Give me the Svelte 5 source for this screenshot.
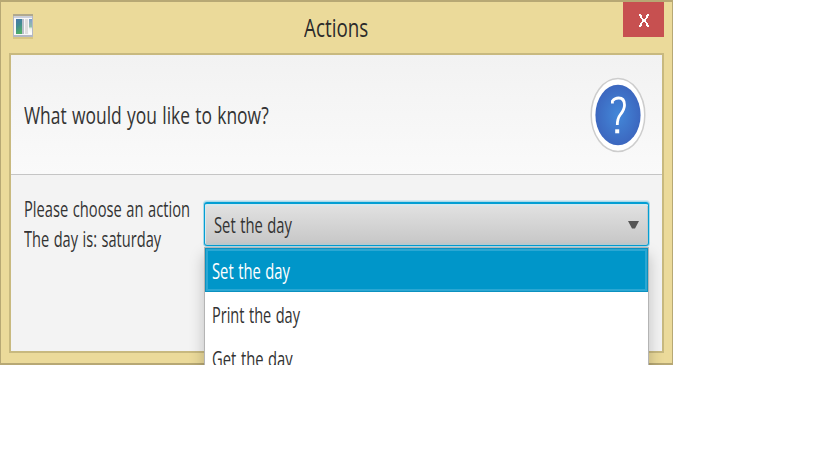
<script>
  const actions = ['Set the day', 'Print the day', 'Get the day'];
  const widths = [78, 88, 81];

  // Condenses a label horizontally so that it takes up the given width.
  function fit(node, width) {
    const apply = () => {
      node.style.transform = 'none';
      node.style.transform = `scaleX(${width / node.offsetWidth})`;
    };
    apply();
    document.fonts?.ready.then(apply);
  }
</script>

<div class="window">
  <header class="titlebar">
    <svg class="app-icon" width="20" height="25" viewBox="0 0 20 25">
      <defs>
        <linearGradient id="pane" x1="0" y1="0" x2="0.3" y2="1">
          <stop offset="0" stop-color="#4878ad" />
          <stop offset="0.5" stop-color="#408a92" />
          <stop offset="1" stop-color="#4fae68" />
        </linearGradient>
        <linearGradient id="side" x1="0" y1="0" x2="0" y2="1">
          <stop offset="0" stop-color="#7f9fce" />
          <stop offset="0.5" stop-color="#93bda9" />
          <stop offset="0.65" stop-color="#eef3ee" />
          <stop offset="1" stop-color="#fff" />
        </linearGradient>
      </defs>
      <rect width="20" height="25" fill="#d7c583" />
      <rect width="20" height="23" fill="#b4b8c4" />
      <rect width="20" height="2" fill="#b0a98e" />
      <rect x="1" y="2" width="18" height="2" fill="#ccd0dc" />
      <rect x="1" y="4" width="18" height="17" fill="#f8f8f8" />
      <rect x="3" y="5" width="6" height="15" fill="url(#pane)" />
      <rect x="9" y="5" width="2" height="15" fill="#b9bfc9" />
      <rect x="12" y="5" width="3" height="15" fill="#dedede" />
      <rect x="16" y="5" width="3" height="15" fill="url(#side)" />
    </svg>
    <h1><span use:fit={64}>Actions</span></h1>
    <button class="close" aria-label="Close">
      <svg width="10" height="13" viewBox="0 0 10 13">
        <path d="M0 0h2v1h1v3h1v1h2v-1h1v-3h1v-1h2v2h-1v2h-1v1h-1v3h1v1h1v2h1v2h-2v-1h-1v-3h-1v-1h-2v1h-1v3h-1v1h-2v-2h1v-2h1v-1h1v-3h-1v-1h-1v-2h-1z" fill="#fff" />
      </svg>
    </button>
  </header>

  <main class="dialog">
    <section class="question">
      <p><span use:fit={245}>What would you like to know?</span></p>
      <svg width="56" height="76" viewBox="0 0 56 76">
        <defs>
          <radialGradient id="blue">
            <stop offset="0" stop-color="#4388d9" />
            <stop offset="1" stop-color="#3c67bf" />
          </radialGradient>
        </defs>
        <ellipse cx="28" cy="38" rx="26.8" ry="36.4" fill="#fff" stroke="#cdcdcd" stroke-width="1.5" />
        <ellipse cx="28" cy="38" rx="22.6" ry="30.2" fill="url(#blue)" />
        <path d="M22.4 26.5V24C24 22 26 21 28.6 21C32.6 21 34.5 24 34.5 28C34.5 32.5 32.4 35 30.4 37.5C28 40.5 27.3 42.5 27.3 48" fill="none" stroke="#fff" stroke-width="2.8" />
        <rect x="25.2" y="52.3" width="4" height="4" fill="#fff" />
      </svg>
    </section>

    <section class="body">
      <div class="labels">
        <p><span use:fit={166}>Please choose an action</span></p>
        <p><span use:fit={137}>The day is: saturday</span></p>
      </div>
      <div class="picker">
        <div class="combo">
          <span use:fit={78}>Set the day</span>
          <svg width="11" height="8" viewBox="0 0 11 8"><path d="M0 0H11L7 7.5H4Z" fill="#555" /></svg>
        </div>
        <ul>
          {#each actions as action, i}
            <li class:selected={i === 0}><span use:fit={widths[i]}>{action}</span></li>
          {/each}
        </ul>
      </div>
    </section>
  </main>
</div>

<style>
  :global(body) {
    background: #fff;
  }
  .window {
    box-sizing: border-box;
    width: 673px;
    height: 365px;
    display: flex;
    flex-direction: column;
    background: #ebda9a;
    border: solid #b7a874;
    border-width: 2px 1px;
    font: 21px/30px 'Open Sans', 'Noto Sans', sans-serif;
    word-spacing: 1px;
    color: #333;
    clip-path: inset(0);
  }
  p, h1, ul {
    margin: 0;
    padding: 0;
    font-weight: 400;
  }
  span {
    display: inline-block;
    white-space: nowrap;
    transform-origin: 0 50%;
  }
  .titlebar {
    flex: none;
    height: 51px;
    display: flex;
    align-items: flex-start;
  }
  .app-icon {
    flex: none;
    margin: 12px 0 0 12px;
  }
  h1 {
    flex: 1;
    margin: 10px 0 0 271px;
    font-size: 25px;
    line-height: 30px;
    color: #2b2b2b;
  }
  .close {
    flex: none;
    width: 41px;
    height: 35px;
    margin-right: 8px;
    padding: 2px 0 0 1px;
    border: 0;
    background: #c75050;
    display: flex;
    align-items: center;
    justify-content: center;
  }
  .dialog {
    box-sizing: border-box;
    flex: none;
    width: 655px;
    height: 300px;
    margin-left: 8px;
    border: 2px solid #c8b97f;
    background: #f3f3f3;
  }
  .question {
    box-sizing: border-box;
    height: 120px;
    padding: 0 16px 0 13px;
    display: flex;
    justify-content: space-between;
    align-items: center;
    background: linear-gradient(#f2f2f2, #fafafa);
    border-bottom: 1px solid #c5c5c5;
  }
  .question p {
    font-size: 24px;
    width: 245px;
  }
  .question svg {
    flex: none;
    margin-top: 1px;
  }
  .body {
    display: flex;
    padding-left: 13px;
  }
  .labels {
    width: 180px;
    padding-top: 19px;
  }
  .picker {
    width: 445px;
    padding-top: 27px;
  }
  .combo {
    box-sizing: border-box;
    height: 44px;
    padding: 0 9px 0 9px;
    display: flex;
    align-items: center;
    justify-content: space-between;
    border: solid #039ed3;
    border-width: 2px 1px 1px;
    border-radius: 3px;
    background: linear-gradient(#e2e2e2, #c6c6c6);
    box-shadow: 0 0 0 1px #a8d9ea, 0 -1px 0 1px #cfe8f1, inset 1px 2px #d5e8ee, inset -1px -2px #bdcbcf;
  }
  .combo svg {
    flex: none;
  }
  ul {
    list-style: none;
    margin-top: 1px;
    border: solid #b4b4b4;
    border-width: 1px 1px 0;
    background: #fff;
    box-shadow: 0 8px 14px rgba(0, 0, 0, 0.22);
    position: relative;
  }
  li {
    box-sizing: border-box;
    height: 44px;
    padding: 8px 0 6px 7px;
  }
  li.selected {
    background: #0096c9;
    color: #fff;
    border: 1px solid #0b91bf;
    padding: 7px 6px 5px;
    box-shadow: inset 0 0 0 2px #2ba7d3;
  }
</style>
